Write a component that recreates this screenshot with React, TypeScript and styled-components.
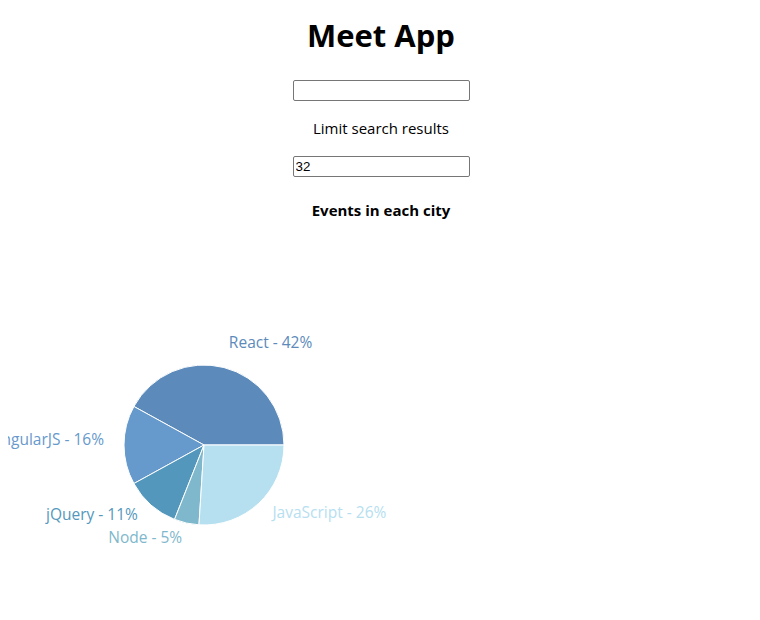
import React from "react";
import styled, { createGlobalStyle } from "styled-components";

const GlobalStyle = createGlobalStyle`
  body {
    margin: 8px;
    font-family: "Open Sans", "Noto Sans", sans-serif;
    background: #ffffff;
  }
`;

const AppWrap = styled.div`
  text-align: center;
  display: flex;
  flex-direction: column;
  align-items: center;
  padding-left: 2px;
`;

const Title = styled.h1`
  font-size: 31px;
  font-weight: 700;
  margin: 9px 0 26px;
  line-height: 1.2;
  color: #000;
`;

const TextInput = styled.input`
  width: 177px;
  height: 21px;
  box-sizing: border-box;
  border: 1px solid #767676;
  border-radius: 2px;
  padding: 1px 2px;
  font-family: "Liberation Sans", Arial, sans-serif;
  font-size: 13.33px;
  color: #000;
  text-align: left;
  outline: none;
`;

const Label = styled.p`
  margin: 16px 0 17px;
  font-size: 15px;
  line-height: 22px;
`;

const ChartTitle = styled.h4`
  margin: 22px 0 0;
  font-size: 15px;
  font-weight: 700;
  line-height: 22px;
`;

const ChartArea = styled.div`
  align-self: flex-start;
  margin-left: -10px;
  width: 408px;
  height: 350px;
  margin-top: 24px;
  overflow: visible;
`;

const SliceLabel = styled.text`
  font-family: "Open Sans", "Noto Sans", sans-serif;
  font-size: 15.5px;
`;

const data = [
  { name: "React", value: 42, color: "#5c8bbb" },
  { name: "AngularJS", value: 16, color: "#6699cc" },
  { name: "jQuery", value: 11, color: "#5398bc" },
  { name: "Node", value: 5, color: "#7fb8cc" },
  { name: "JavaScript", value: 26, color: "#b6e0f0" },
];

const Pie: React.FC = () => {
  const cx = 204;
  const cy = 200;
  const r = 80;
  const total = data.reduce((s, d) => s + d.value, 0);
  let angle = 0;
  const rad = Math.PI / 180;
  return (
    <svg width={408} height={350} style={{ overflow: "visible", display: "block" }}>
      {data.map((d) => {
        const start = angle;
        const end = angle + (d.value / total) * 360;
        angle = end;
        const x1 = cx + r * Math.cos(start * rad);
        const y1 = cy - r * Math.sin(start * rad);
        const x2 = cx + r * Math.cos(end * rad);
        const y2 = cy - r * Math.sin(end * rad);
        const large = end - start > 180 ? 1 : 0;
        const mid = (start + end) / 2;
        const lx = cx + (r + 20) * Math.cos(mid * rad);
        const ly = cy - (r + 20) * Math.sin(mid * rad);
        const pct = Math.round((d.value / total) * 100);
        return (
          <g key={d.name}>
            <path
              d={`M${cx},${cy} L${x1},${y1} A${r},${r} 0 ${large} 0 ${x2},${y2} Z`}
              fill={d.color}
              stroke="#fff"
              strokeWidth={1}
            />
            <SliceLabel
              x={lx}
              y={ly}
              fill={d.color}
              textAnchor={lx > cx ? "start" : "end"}
            >
              {`${d.name} - ${pct}%`}
            </SliceLabel>
          </g>
        );
      })}
    </svg>
  );
};

export default function App() {
  return (
    <>
      <GlobalStyle />
      <AppWrap>
        <Title>Meet App</Title>
        <TextInput type="text" defaultValue="" />
        <Label>Limit search results</Label>
        <TextInput type="number" defaultValue="32" />
        <ChartTitle>Events in each city</ChartTitle>
        <ChartArea>
          <Pie />
        </ChartArea>
      </AppWrap>
    </>
  );
}
